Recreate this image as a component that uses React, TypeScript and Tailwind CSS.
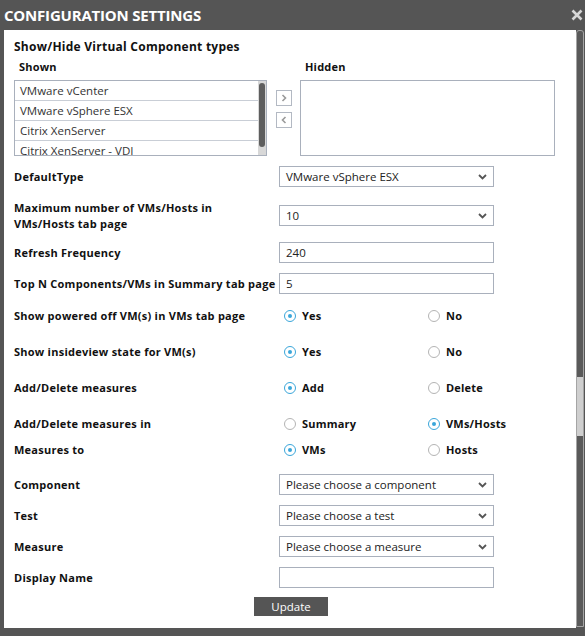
import React from 'react';

const font = { fontFamily: '"Open Sans", "DejaVu Sans", sans-serif' };

const Chevron = () => (
  <svg width="9" height="6" viewBox="0 0 9 6" className="shrink-0">
    <polyline points="1,1 4.5,4.5 8,1" fill="none" stroke="#555" strokeWidth="1.8" />
  </svg>
);

const Select = ({ value }: { value: string }) => (
  <div className="w-[215px] h-[21px] border border-[#a9b0bc] bg-white flex items-center justify-between pl-[6px] pr-[6px]">
    <span className="text-[11.5px] text-[#222]">{value}</span>
    <Chevron />
  </div>
);

const TextBox = ({ value = '' }: { value?: string }) => (
  <div className="w-[215px] h-[21px] border border-[#a9b0bc] bg-white flex items-center pl-[6px]">
    <span className="text-[11.5px] text-[#222]">{value}</span>
  </div>
);

const Radio = ({ checked, label }: { checked?: boolean; label: string }) => (
  <div className="flex items-center gap-[6px]">
    <span
      className={
        checked
          ? 'w-[12px] h-[12px] rounded-full border border-[#3aa6da] flex items-center justify-center'
          : 'w-[12px] h-[12px] rounded-full border border-[#b4b4b4]'
      }
    >
      {checked && <span className="w-[4px] h-[4px] rounded-full bg-[#3aa6da]" />}
    </span>
    <span className="text-[11px] font-bold text-[#111] tracking-[0.2px]">{label}</span>
  </div>
);

const FieldRow = ({ label, children, className }: { label: React.ReactNode; children: React.ReactNode; className: string }) => (
  <div className={'flex items-center ' + className}>
    <div className="w-[265px] text-[11px] font-bold text-[#111] leading-[16px] tracking-[0.25px]">{label}</div>
    {children}
  </div>
);

const RadioRow = ({ label, a, b, first, className }: { label: string; a: string; b: string; first: boolean; className: string }) => (
  <div className={'flex items-center h-[20px] ' + className}>
    <div className="w-[270px] text-[11px] font-bold text-[#111] tracking-[0.25px]">{label}</div>
    <div className="w-[144px]">
      <Radio checked={first} label={a} />
    </div>
    <Radio checked={!first} label={b} />
  </div>
);

const ArrowBtn = ({ dir }: { dir: 'right' | 'left' }) => (
  <div className="w-[16px] h-[16px] border border-[#b3b9c3] flex items-center justify-center bg-white">
    <svg width="6" height="8" viewBox="0 0 6 8">
      <polyline
        points={dir === 'right' ? '1.5,1 4.5,4 1.5,7' : '4.5,1 1.5,4 4.5,7'}
        fill="none"
        stroke="#9a9a9a"
        strokeWidth="1.6"
      />
    </svg>
  </div>
);

const shown = ['VMware vCenter', 'VMware vSphere ESX', 'Citrix XenServer', 'Citrix XenServer - VDI'];

export default function App() {
  return (
    <div className="w-[585px] h-[636px] bg-[#555555] flex flex-col overflow-hidden" style={font}>
      {/* Title bar */}
      <div className="h-[30px] shrink-0 flex items-center justify-between pl-[4px] pr-[2px]">
        <span className="text-[15px] font-bold text-white tracking-[-0.2px]">CONFIGURATION SETTINGS</span>
        <svg width="12" height="12" viewBox="0 0 12 12">
          <path d="M1.5 1.5 L10.5 10.5 M10.5 1.5 L1.5 10.5" stroke="#d6d6d6" strokeWidth="2.6" />
        </svg>
      </div>

      <div className="flex h-[598px] shrink-0">
        {/* Body */}
        <div className="ml-[4px] w-[572px] bg-white flex flex-col pl-[10px] pt-[9px]">
          <div className="text-[12px] font-bold text-[#111] leading-[16px] tracking-[0.25px]">Show/Hide Virtual Component types</div>
          <div className="flex mt-[4px] leading-[16px] text-[11px] font-bold text-[#111] tracking-[0.2px]">
            <span className="ml-[5px] w-[286px]">Shown</span>
            <span>Hidden</span>
          </div>

          <div className="flex mt-[5px] items-start">
            <div className="w-[253px] h-[76px] border border-[#a9b0bc] flex overflow-hidden">
              <div className="flex-1 flex flex-col">
                {shown.map((s, i) => (
                  <div
                    key={s}
                    className={
                      i < shown.length - 1
                        ? 'h-[20px] shrink-0 border-b border-[#c9ced6] pl-[5px] flex items-center text-[11.5px] text-[#333]'
                        : 'h-[20px] shrink-0 pl-[5px] flex items-center text-[11.5px] text-[#333]'
                    }
                  >
                    {s}
                  </div>
                ))}
              </div>
              <div className="w-[8px] bg-[#d8d8d8] flex flex-col">
                <div className="mt-[2px] h-[64px] mx-[1px] rounded-[3px] bg-[#5e5e5e]" />
              </div>
            </div>
            <div className="ml-[9px] mt-[10px] flex flex-col gap-[6px]">
              <ArrowBtn dir="right" />
              <ArrowBtn dir="left" />
            </div>
            <div className="ml-[8px] w-[255px] h-[76px] border border-[#a9b0bc]" />
          </div>

          <FieldRow label="DefaultType" className="mt-[10px] h-[21px]">
            <Select value="VMware vSphere ESX" />
          </FieldRow>
          <FieldRow
            label={
              <>
                Maximum number of VMs/Hosts in
                <br />
                VMs/Hosts tab page
              </>
            }
            className="mt-[12px] h-[33px]"
          >
            <Select value="10" />
          </FieldRow>
          <FieldRow label="Refresh Frequency" className="mt-[10px] h-[21px]">
            <TextBox value="240" />
          </FieldRow>
          <FieldRow label="Top N Components/VMs in Summary tab page" className="mt-[10px] h-[21px]">
            <TextBox value="5" />
          </FieldRow>

          <RadioRow label="Show powered off VM(s) in VMs tab page" a="Yes" b="No" first className="mt-[12px]" />
          <RadioRow label="Show insideview state for VM(s)" a="Yes" b="No" first className="mt-[16px]" />
          <RadioRow label="Add/Delete measures" a="Add" b="Delete" first className="mt-[16px]" />
          <RadioRow label="Add/Delete measures in" a="Summary" b="VMs/Hosts" first={false} className="mt-[16px]" />
          <RadioRow label="Measures to" a="VMs" b="Hosts" first className="mt-[6px]" />

          <FieldRow label="Component" className="mt-[14px] h-[21px]">
            <Select value="Please choose a component" />
          </FieldRow>
          <FieldRow label="Test" className="mt-[10px] h-[21px]">
            <Select value="Please choose a test" />
          </FieldRow>
          <FieldRow label="Measure" className="mt-[10px] h-[21px]">
            <Select value="Please choose a measure" />
          </FieldRow>
          <FieldRow label="Display Name" className="mt-[10px] h-[21px]">
            <TextBox />
          </FieldRow>

          <div className="mt-[9px] flex pl-[240px]">
            <div className="w-[74px] h-[19px] bg-[#555555] text-white text-[11.5px] flex items-center justify-center">
              Update
            </div>
          </div>
        </div>

        {/* Page scrollbar */}
        <div className="w-[8px] h-[597px] border border-[#a5a5a5] rounded-t-[3px] bg-[#5a5a5a] flex flex-col">
          <div className="h-[346px] shrink-0" />
          <div className="h-[59px] shrink-0 bg-[#cfcfcf]" />
        </div>
      </div>
    </div>
  );
}
